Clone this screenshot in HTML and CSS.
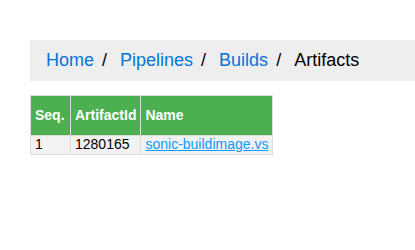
FILE: index.html
```html
<!DOCTYPE html>
<html lang="en">
<head>
<meta charset="UTF-8">
<meta name="viewport" content="width=device-width, initial-scale=1.0">
<title>Artifacts</title>
<link rel="stylesheet" href="styles.css">
</head>
<body>
<div class="page">
    <ul class="breadcrumb"><li><a href="#">Home</a></li><li><a href="#">Pipelines</a></li><li><a href="#">Builds</a></li><li>Artifacts</li></ul>

    <table class="artifacts">
        <tr>
            <th class="col-seq">Seq.</th>
            <th class="col-id">ArtifactId</th>
            <th>Name</th>
        </tr>
        <tr>
            <td>1</td>
            <td>1280165</td>
            <td><a href="#">sonic-buildimage.vs</a></td>
        </tr>
    </table>
</div>
</body>
</html>
```

FILE: styles.css
```css
body {
    margin: 0;
    font-family: "Liberation Sans", Arial, sans-serif;
    overflow: hidden;
}
.page {
    padding: 40px 0 0 30px;
}
ul.breadcrumb {
    margin: 0 0 14px 0;
    padding: 10px 16px;
    list-style: none;
    background-color: #eee;
}
ul.breadcrumb li {
    display: inline;
    font-size: 18px;
}
ul.breadcrumb li + li:before {
    padding: 8px;
    color: black;
    content: "/\00a0";
}
ul.breadcrumb li a {
    color: #0275d8;
    text-decoration: none;
}
.artifacts {
    border-collapse: collapse;
    font-size: 14px;
    line-height: 15px;
}
.artifacts th,
.artifacts td {
    border: 1px solid #ddd;
    text-align: left;
}
.artifacts th {
    padding: 12px 4px;
    background-color: #4CAF50;
    color: white;
}
.artifacts td {
    padding: 1px 4px 2px;
    background-color: #f2f2f2;
}
.artifacts .col-seq {
    width: 31px;
}
.artifacts .col-id {
    width: 60px;
}
.artifacts td a {
    color: #0a9cff;
}
```
